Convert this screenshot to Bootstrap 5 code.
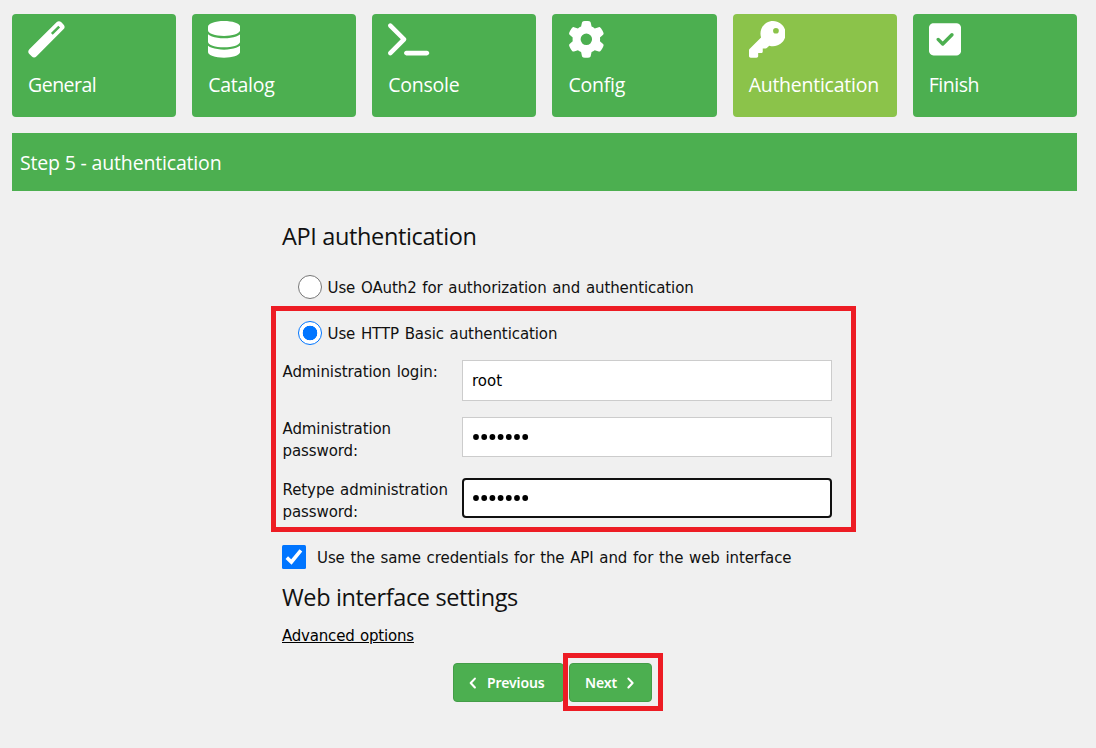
<!DOCTYPE html>
<html lang="en">
<head>
<meta charset="utf-8">
<meta name="viewport" content="width=device-width, initial-scale=1">
<title>Step 5 - authentication</title>
<link href="https://cdn.jsdelivr.net/npm/bootstrap@5.3.0/dist/css/bootstrap.min.css" rel="stylesheet">
<style>
body{background:#f0f0f0;color:#111;font:15px/22px "DejaVu Sans",sans-serif;min-height:100vh;word-spacing:1px;letter-spacing:-.09px}
.wizard,.banner{width:1064.9px;margin-left:12px}
.wizard{padding-top:14px}
.step{height:103px;background:#4caf50;color:#fff;border-radius:4px;padding:7px 0 0 16px;font:19.5px/28px "Open Sans",sans-serif;letter-spacing:-.25px;word-spacing:0;text-decoration:none;flex:1 1 0}
.step.active{background:#8bc34a}
.step svg{display:block;height:36.7px;fill:#fff;margin-bottom:13.5px}
.step span,h1,h2,.t{white-space:nowrap}
.tight{letter-spacing:-.5px}
h1{height:58px;margin:16px 0 0;padding-left:8px;background:#4caf50;color:#fff;font:19.5px/60px "Open Sans",sans-serif;letter-spacing:-.17px;word-spacing:0}
.setup{width:550px;margin:0 0 0 282px}
h2{font:23.5px/34px "Open Sans",sans-serif;letter-spacing:-.36px;word-spacing:0;margin:0}
.api{padding-top:28px;height:84px}
.pick{height:24px;margin-left:16px}
.pick .form-check-input{width:24px;height:24px;margin:0;float:none;box-shadow:none;flex:none;border:1px solid #767676;background:#fff}
.pick .form-check-input:checked{border-color:#0075ff;background:radial-gradient(circle,#0075ff 7px,#fff 7.6px)}
.pick .t{margin-left:5.5px;padding-top:2px}
.basic{margin-top:22px}
.field-name{width:180px;flex:none;padding:1px 0 0 .5px}
.r1{margin-top:15px;height:57px}
.r2{height:61px}
.r3{height:44px}
.form-control{border:1px solid #ccc;border-radius:0;height:41px;padding:0 9px;font:15px/22px "DejaVu Sans",sans-serif;color:#000}
.form-control.current{border:2px solid #101010;border-radius:4px;padding:0 8px}
.form-control.dots{height:40px}
.dots svg{margin-left:-.5px}
.callout{position:absolute;border:5px solid #ed1c24;pointer-events:none}
.c-form{left:-11px;right:-24px;top:-15px;height:226px}
.c-next{left:-6px;top:-10px;width:100px;height:58px}
.same{margin-top:23px;height:24px}
.same .t{margin-left:11px;padding-top:2px}
.ticked{width:24px;height:24px;flex:none}
.web{margin-top:11px;margin-bottom:11px}
.adv{display:inline-block;line-height:22px;letter-spacing:-.2px}
.actions{margin:16px 0 0 171px;gap:5px}
.btn-step{height:39px;background:#4caf50;border:1px solid #449d48;border-radius:4px;color:#fff;font:600 14px/20px "Noto Sans",sans-serif;letter-spacing:-.1px;word-spacing:0;padding:0 15px;gap:9px}
.btn-step svg{fill:none;stroke:#fff;stroke-width:2.1;stroke-linecap:round;stroke-linejoin:round}
.prev{width:111px}
.next{width:83px}
</style>
</head>
<body>
<nav class="wizard d-flex gap-3">
  <a class="step"><svg viewBox="0 0 37 37" width="37"><path fill-rule="evenodd" d="M28.6 1.3Q31 -1 33.5 1.3L35.6 3.5Q38 6 35.6 8.3L8.5 35.5Q6 38 3.5 35.5L1.2 33.2Q-1 31 1.2 28.6ZM30.4 4.8L23 12.2L24.8 13.9L32.2 6.6Z"/></svg><span class="tight">General</span></a>
  <a class="step"><svg viewBox="0 0 448 512"><path d="M448 80v48c0 44.2-100.3 80-224 80S0 172.2 0 128V80C0 35.8 100.3 0 224 0S448 35.8 448 80zM393.2 214.7c20.8-7.4 39.9-16.9 54.8-28.6V288c0 44.2-100.3 80-224 80S0 332.2 0 288V186.1c14.9 11.8 34 21.2 54.8 28.6C99.7 230.7 159.5 240 224 240s124.3-9.3 169.2-25.3zM0 346.1c14.9 11.8 34 21.2 54.8 28.6C99.7 390.7 159.5 400 224 400s124.3-9.3 169.2-25.3c20.8-7.4 39.9-16.9 54.8-28.6V432c0 44.2-100.3 80-224 80S0 476.2 0 432V346.1z"/></svg><span>Catalog</span></a>
  <a class="step"><svg viewBox="0 0 576 512"><path d="M9.4 86.6C-3.1 74.1-3.1 53.9 9.4 41.4s32.8-12.5 45.3 0l192 192c12.5 12.5 12.5 32.8 0 45.3l-192 192c-12.5 12.5-32.8 12.5-45.3 0s-12.5-32.8 0-45.3L178.7 256 9.4 86.6zM256 416H544c17.7 0 32 14.3 32 32s-14.3 32-32 32H256c-17.7 0-32-14.3-32-32s14.3-32 32-32z"/></svg><span>Console</span></a>
  <a class="step"><svg viewBox="0 0 512 512"><path d="M495.9 166.6c3.2 8.7 .5 18.4-6.4 24.6l-43.3 39.4c1.1 8.3 1.7 16.8 1.7 25.4s-.6 17.1-1.7 25.4l43.3 39.4c6.9 6.2 9.6 15.9 6.4 24.6c-4.4 11.9-9.7 23.3-15.8 34.3l-4.7 8.1c-6.6 11-14 21.4-22.1 31.2c-5.9 7.2-15.7 9.6-24.5 6.8l-55.7-17.7c-13.4 10.3-28.2 18.9-44 25.4l-12.5 57.1c-2 9.1-9 16.3-18.2 17.8c-13.8 2.3-28 3.5-42.5 3.5s-28.7-1.2-42.5-3.5c-9.2-1.5-16.2-8.7-18.2-17.8l-12.5-57.1c-15.8-6.5-30.6-15.1-44-25.4L83.1 425.9c-8.8 2.8-18.6 .3-24.5-6.8c-8.1-9.8-15.5-20.2-22.1-31.2l-4.7-8.1c-6.1-11-11.4-22.4-15.8-34.3c-3.2-8.7-.5-18.4 6.4-24.6l43.3-39.4C64.6 273.1 64 264.6 64 256s.6-17.1 1.7-25.4L22.4 191.2c-6.9-6.2-9.6-15.9-6.4-24.6c4.4-11.9 9.7-23.3 15.8-34.3l4.7-8.1c6.6-11 14-21.4 22.1-31.2c5.9-7.2 15.7-9.6 24.5-6.8l55.7 17.7c13.4-10.3 28.2-18.9 44-25.4l12.5-57.1c2-9.1 9-16.3 18.2-17.8C227.3 1.2 241.5 0 256 0s28.7 1.2 42.5 3.5c9.2 1.5 16.2 8.7 18.2 17.8l12.5 57.1c15.8 6.5 30.6 15.1 44 25.4l55.7-17.7c8.8-2.8 18.6-.3 24.5 6.8c8.1 9.8 15.5 20.2 22.1 31.2l4.7 8.1c6.1 11 11.4 22.4 15.8 34.3zM256 336a80 80 0 1 0 0-160 80 80 0 1 0 0 160z"/></svg><span>Config</span></a>
  <a class="step active"><svg viewBox="0 0 512 512"><path d="M336 352c97.2 0 176-78.8 176-176S433.2 0 336 0S160 78.8 160 176c0 18.7 2.9 36.8 8.3 53.7L7 391c-4.5 4.5-7 10.6-7 17v80c0 13.3 10.7 24 24 24h80c13.3 0 24-10.7 24-24V448h40c13.3 0 24-10.7 24-24V384h40c6.4 0 12.5-2.5 17-7l33.3-33.3c16.9 5.4 35 8.3 53.7 8.3zM376 96a40 40 0 1 1 0 80 40 40 0 1 1 0-80z"/></svg><span>Authentication</span></a>
  <a class="step"><svg viewBox="0 0 448 512"><path d="M64 32C28.7 32 0 60.7 0 96V416c0 35.3 28.7 64 64 64H384c35.3 0 64-28.7 64-64V96c0-35.3-28.7-64-64-64H64zM337 209L209 337c-9.4 9.4-24.6 9.4-33.9 0l-64-64c-9.4-9.4-9.4-24.6 0-33.9s24.6-9.4 33.9 0l47 47L303 175c9.4-9.4 24.6-9.4 33.9 0s9.4 24.6 0 33.9z"/></svg><span class="tight">Finish</span></a>
</nav>
<div class="banner"><h1>Step 5 - authentication</h1></div>
<form class="setup">
  <h2 class="api">API authentication</h2>
  <label class="pick d-flex align-items-center"><input class="form-check-input" type="radio" name="auth"><span class="t">Use OAuth2 for authorization and authentication</span></label>
  <div class="basic position-relative">
    <label class="pick d-flex align-items-center"><input class="form-check-input" type="radio" name="auth" checked><span class="t">Use HTTP Basic authentication</span></label>
    <div class="d-flex r1"><label class="field-name" for="login">Administration login:</label><input id="login" class="form-control" value="root"></div>
    <div class="d-flex r2"><label class="field-name">Administration<br>password:</label><div class="form-control dots d-flex align-items-center"><svg width="58" height="8"><circle cx="4" cy="4" r="2.9"/><circle cx="12.2" cy="4" r="2.9"/><circle cx="20.4" cy="4" r="2.9"/><circle cx="28.6" cy="4" r="2.9"/><circle cx="36.8" cy="4" r="2.9"/><circle cx="45" cy="4" r="2.9"/><circle cx="53.2" cy="4" r="2.9"/></svg></div></div>
    <div class="d-flex r3"><label class="field-name">Retype administration<br>password:</label><div class="form-control current dots d-flex align-items-center"><svg width="58" height="8"><circle cx="4" cy="4" r="2.9"/><circle cx="12.2" cy="4" r="2.9"/><circle cx="20.4" cy="4" r="2.9"/><circle cx="28.6" cy="4" r="2.9"/><circle cx="36.8" cy="4" r="2.9"/><circle cx="45" cy="4" r="2.9"/><circle cx="53.2" cy="4" r="2.9"/></svg></div></div>
    <div class="callout c-form"></div>
  </div>
  <div class="same d-flex align-items-center"><svg class="ticked" viewBox="0 0 24 24"><rect width="24" height="24" rx="1.5" fill="#0075ff"/><path d="M4.8 12.6L9.4 17L18.9 5.4" fill="none" stroke="#fff" stroke-width="3.6"/></svg><span class="t">Use the same credentials for the API and for the web interface</span></div>
  <h2 class="web">Web interface settings</h2>
  <a class="adv text-black t" href="#">Advanced options</a>
  <div class="actions d-flex">
    <button type="button" class="btn-step prev d-flex align-items-center"><svg width="9" height="14"><path d="M5.9 2.6L1.7 7L5.9 11.4"/></svg><span>Previous</span></button>
    <div class="position-relative"><button type="button" class="btn-step next d-flex align-items-center"><span>Next</span><svg width="9" height="14"><path d="M2.4 2.6L6.6 7L2.4 11.4"/></svg></button><div class="callout c-next"></div></div>
  </div>
</form>
<script src="https://cdn.jsdelivr.net/npm/bootstrap@5.3.0/dist/js/bootstrap.bundle.min.js"></script>
</body>
</html>
